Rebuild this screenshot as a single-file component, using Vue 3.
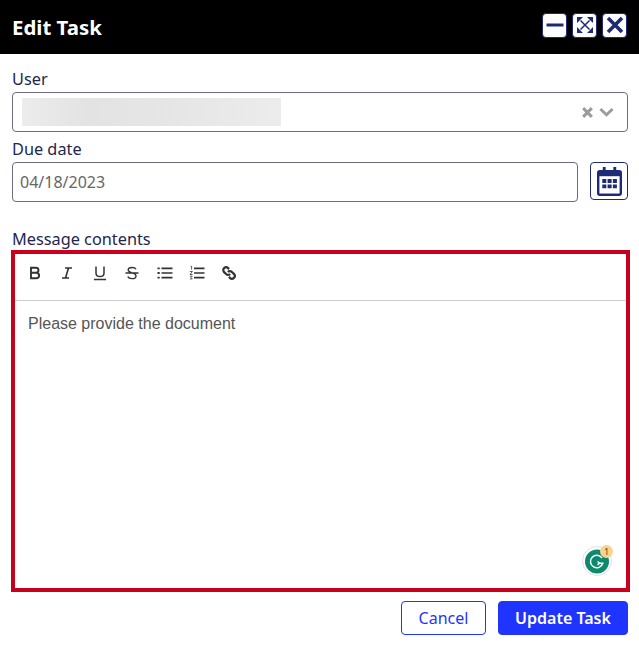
<script setup>
const tools = ['bold', 'italic', 'underline', 'strike', 'bullets', 'numbers', 'link'];
</script>

<template>
  <div class="dialog">
    <header class="titlebar">
      <h1>Edit Task</h1>
      <div class="window-btns">
        <button class="win-btn" aria-label="Minimize">
          <svg viewBox="0 0 22 22" width="22" height="22"><path d="M2.500 11h17" stroke="#1e2a78" stroke-width="3" fill="none" /></svg>
        </button>
        <button class="win-btn" aria-label="Maximize">
          <svg viewBox="0 0 22 22" width="22" height="22">
            <path d="M6.500 6.500l9 9M15.500 6.500l-9 9" stroke="#1e2a78" stroke-width="1.500" fill="none" />
            <path d="M3 3h6L3 9zM19 3h-6l6 6zM3 19h6l-6-6zM19 19h-6l6-6z" fill="#1e2a78" />
          </svg>
        </button>
        <button class="win-btn" aria-label="Close">
          <svg viewBox="0 0 22 22" width="22" height="22"><path d="M4 4l14 14M18 4L4 18" stroke="#1e2a78" stroke-width="3.600" fill="none" /></svg>
        </button>
      </div>
    </header>

    <main class="body">
      <label class="field-label">User</label>
      <div class="input select">
        <div class="blurred"></div>
        <svg class="clear" viewBox="0 0 12 12" width="13" height="13"><path d="M2 2l8 8M10 2l-8 8" stroke="#9b9b9b" stroke-width="2.800" fill="none" /></svg>
        <svg class="chevron" viewBox="0 0 16 10" width="15" height="10"><path d="M1.500 1.800L8 8l6.500-6.200" stroke="#9b9b9b" stroke-width="3" fill="none" /></svg>
      </div>

      <label class="field-label due">Due date</label>
      <div class="date-row">
        <div class="input date">04/18/2023</div>
        <button class="cal-btn" aria-label="Pick date">
          <svg viewBox="0 0 26 30" width="25" height="29">
            <path d="M6 0h3v3h8V0h3v3h3a3 3 0 0 1 3 3v21a3 3 0 0 1-3 3H3a3 3 0 0 1-3-3V6a3 3 0 0 1 3-3h3z" fill="#1e2a78" />
            <rect x="2.500" y="9.500" width="21" height="18" fill="#fff" />
            <path d="M5.500 12.500h4.200v4H5.500zM11 12.500h4.200v4H11zM16.500 12.500h4.200v4h-4.200zM5.500 18h4.200v4H5.500zM11 18h4.200v4H11zM16.500 18h4.200v4h-4.200z" fill="#1e2a78" />
          </svg>
        </button>
      </div>

      <label class="field-label message">Message contents</label>
      <section class="editor">
        <div class="toolbar">
          <span v-for="tool in tools" :key="tool" class="tool">
            <svg v-if="tool === 'bold'" viewBox="0 0 16 16" width="16" height="16"><path d="M4 2.800h4.600c1.800 0 2.900 1 2.900 2.400S10.400 7.700 8.600 7.700H4zM4 7.700h5.100c1.900 0 3 1.100 3 2.700s-1.100 2.800-3 2.800H4z" fill="none" stroke="#333" stroke-width="1.900" /></svg>
            <svg v-else-if="tool === 'italic'" viewBox="0 0 16 16" width="16" height="16"><path d="M6 3h7M3 13h7M9.500 3l-3 10" fill="none" stroke="#333" stroke-width="1.600" /></svg>
            <svg v-else-if="tool === 'underline'" viewBox="0 0 16 16" width="16" height="16"><path d="M4 1.500v6.500c0 2.400 1.600 3.600 4 3.600s4-1.200 4-3.600V1.500M2 14.500h12" fill="none" stroke="#333" stroke-width="1.500" /></svg>
            <svg v-else-if="tool === 'strike'" viewBox="0 0 16 16" width="16" height="16"><path d="M12 4.300C11.400 3 10 2.500 8 2.500c-2.400 0-3.800 1-3.800 2.600 0 3.500 7.800 2 7.800 5.800 0 1.700-1.600 2.700-4 2.700-2.200 0-3.600-.7-4.200-2.100M1.500 8h13" fill="none" stroke="#333" stroke-width="1.400" /></svg>
            <svg v-else-if="tool === 'bullets'" viewBox="0 0 16 16" width="16" height="16"><path d="M4.500 3.300h11M4.500 8h11M4.500 12.700h11" stroke="#333" stroke-width="1.700" /><path d="M.5 2.400h2.200v1.800H.5zM.5 7.100h2.200v1.800H.5zM.5 11.800h2.200v1.800H.5z" fill="#333" /></svg>
            <svg v-else-if="tool === 'numbers'" viewBox="0 0 16 16" width="16" height="16"><path d="M5 3.300h10.500M5 8h10.500M5 12.700h10.500" stroke="#333" stroke-width="1.700" /><path d="M1.500 1.300h1.100v3.400M.8 6.500h2.600l-2.400 3h2.600M.9 11.200h2.300l-1.200 1.300 1.300 1.400H.9" fill="none" stroke="#333" stroke-width=".8" /></svg>
            <svg v-else viewBox="0 0 16 16" width="16" height="16"><path d="M6.900 9.100a2.800 2.800 0 0 1 0-4l2-2a2.800 2.800 0 0 1 4 4l-1 1M9.100 6.900a2.800 2.800 0 0 1 0 4l-2 2a2.800 2.800 0 0 1-4-4l1-1" fill="none" stroke="#333" stroke-width="2.200" transform="rotate(-90 8 8)" /></svg>
          </span>
        </div>
        <div class="content">
          <p>Please provide the document</p>
          <div class="grammarly">
            <svg viewBox="0 0 30 30" width="30" height="30">
              <circle cx="15" cy="15" r="14.500" fill="#fff" stroke="#dde0e6" />
              <circle cx="15" cy="15.500" r="12" fill="#0b8a6d" />
              <path d="M20 12a6.300 6.300 0 1 0 .8 5.300h-5" fill="none" stroke="#fff" stroke-width="1.500" />
              <path d="M15.500 15.500l2.400 1.800-2.400 1.800" fill="none" stroke="#fff" stroke-width="1.200" />
            </svg>
            <span class="badge">1</span>
          </div>
        </div>
      </section>

      <footer class="actions">
        <button class="btn cancel">Cancel</button>
        <button class="btn primary">Update Task</button>
      </footer>
    </main>
  </div>
</template>

<style>
html, body {
  margin: 0;
  background: #fff;
}
</style>

<style scoped>
.dialog {
  width: 639px;
  height: 647px;
  overflow: hidden;
  font-family: "Noto Sans", "Open Sans", sans-serif;
  color: #22264f;
}
.titlebar {
  height: 54px;
  background: #000;
  display: flex;
  align-items: center;
  justify-content: space-between;
  padding: 0 12px;
}
.titlebar h1 {
  margin: 0;
  font-size: 20.400px;
  font-weight: 700;
  color: #fff;
}
.window-btns {
  display: flex;
  gap: 5px;
  margin-top: -4px;
}
.win-btn {
  width: 25px;
  height: 25px;
  padding: 0;
  background: #fff;
  border: 1px solid #1e2a78;
  border-radius: 4px;
  display: flex;
  align-items: center;
  justify-content: center;
}
.body {
  padding: 13px 11px 0 12px;
}
.field-label {
  display: block;
  font-size: 16.300px;
  line-height: 24px;
}
.input {
  box-sizing: border-box;
  height: 40px;
  border: 1px solid #6b6b85;
  border-radius: 4px;
  background: #fff;
}
.select {
  display: flex;
  align-items: center;
  padding: 0 13px 0 9px;
  margin-top: 1px;
}
.blurred {
  width: 259px;
  height: 28px;
  background: linear-gradient(90deg, #ececec, #e3e3e3 25%, #e6e6e6 60%, #ececec);
}
.clear {
  margin-left: auto;
}
.chevron {
  margin-left: 5px;
}
.due {
  margin-top: 5px;
}
.date-row {
  display: flex;
  align-items: flex-start;
  gap: 12px;
  margin-top: 1px;
}
.date {
  flex: 1;
  padding: 0 7px;
  line-height: 38px;
  font-size: 16px;
  color: #666;
}
.cal-btn {
  width: 38px;
  height: 38px;
  padding: 0;
  background: #fff;
  border: 1px solid #1e2a78;
  border-radius: 4px;
  display: flex;
  align-items: center;
  justify-content: center;
}
.message {
  margin-top: 25px;
}
.editor {
  box-sizing: border-box;
  height: 342px;
  margin: -1px -2px 0 -1px;
  border: 4px solid #c8001e;
}
.toolbar {
  box-sizing: border-box;
  height: 47px;
  padding: 0 0 9px 12px;
  display: flex;
  align-items: center;
  gap: 16.400px;
  border-bottom: 1px solid #ccc;
}
.tool {
  display: flex;
}
.content {
  position: relative;
  padding: 13px;
}
.content p {
  margin: 0;
  font-family: "Liberation Sans", Arial, sans-serif;
  font-size: 16px;
  line-height: 19px;
  color: #555;
}
.grammarly {
  position: absolute;
  right: 14px;
  top: 245px;
  width: 30px;
  height: 30px;
}
.badge {
  position: absolute;
  top: -1px;
  right: -1px;
  width: 13px;
  height: 13px;
  border-radius: 50%;
  background: #fbd38d;
  color: #5a4a20;
  font-size: 9px;
  line-height: 13px;
  text-align: center;
}
.actions {
  display: flex;
  justify-content: flex-end;
  gap: 12px;
  margin-top: 9px;
}
.btn {
  height: 34px;
  border-radius: 4px;
  font-family: inherit;
  font-size: 16px;
  padding: 0;
}
.cancel {
  width: 85px;
  background: #fff;
  color: #1f35ff;
  border: 1px solid #1f35ff;
}
.primary {
  width: 130px;
  background: #1f35ff;
  color: #fff;
  font-weight: 600;
  border: 1px solid #1f35ff;
}
</style>
